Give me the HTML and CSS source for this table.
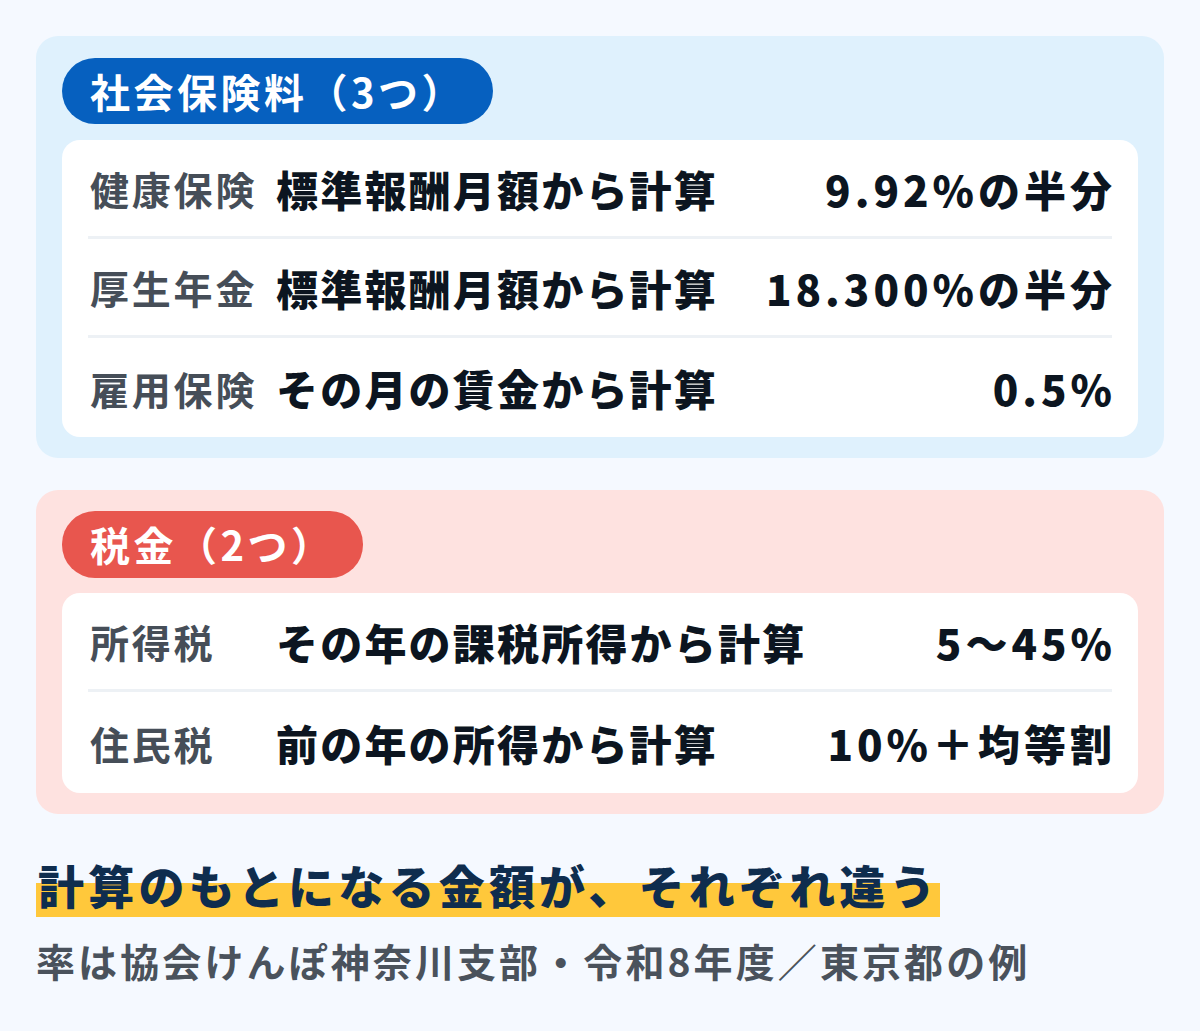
FILE: index.html
```html
<!DOCTYPE html>
<html lang="ja">
<head>
<meta charset="utf-8">
<link rel="stylesheet" href="styles.css">
</head>
<body>
<main class="page">
  <section class="panel panel-blue">
    <div class="badge badge-blue">社会保険料（3つ）</div>
    <div class="card">
      <div class="row">
        <span class="label">健康保険</span>
        <span class="desc">標準報酬月額から計算</span>
        <span class="value">9.92%の半分</span>
      </div>
      <div class="row">
        <span class="label">厚生年金</span>
        <span class="desc">標準報酬月額から計算</span>
        <span class="value">18.300%の半分</span>
      </div>
      <div class="row">
        <span class="label">雇用保険</span>
        <span class="desc">その月の賃金から計算</span>
        <span class="value">0.5%</span>
      </div>
    </div>
  </section>
  <section class="panel panel-red">
    <div class="badge badge-red">税金（2つ）</div>
    <div class="card">
      <div class="row">
        <span class="label">所得税</span>
        <span class="desc">その年の課税所得から計算</span>
        <span class="value">5〜45%</span>
      </div>
      <div class="row">
        <span class="label">住民税</span>
        <span class="desc">前の年の所得から計算</span>
        <span class="value">10%＋均等割</span>
      </div>
    </div>
  </section>
  <h2 class="headline"><span class="mark">計算のもとになる金額が、それぞれ違う</span></h2>
  <p class="note">率は協会けんぽ神奈川支部・令和8年度／東京都の例</p>
</main>
</body>
</html>
```

FILE: styles.css
```css
* { box-sizing: border-box; }
html, body { margin: 0; padding: 0; }
body {
  background: #f5f9ff;
  font-family: "Noto Sans CJK JP", "Noto Sans", sans-serif;
  width: 1200px;
  height: 1031px;
  overflow: hidden;
}
.page {
  padding: 36px 36px 0 36px;
  display: flex;
  flex-direction: column;
}
.panel {
  border-radius: 22px;
  padding: 22px 26px 21px 26px;
  display: flex;
  flex-direction: column;
  align-items: flex-start;
}
.panel-blue { background: #dff1fd; }
.panel-red { background: #fee2e0; margin-top: 32px; padding-top: 21px; }
.badge {
  height: 66px;
  border-radius: 33px;
  color: #ffffff;
  font-weight: 700;
  font-size: 40px;
  letter-spacing: 3.5px;
  line-height: 66px;
  padding: 0 28px 0 28px;
}
.badge-blue { background: #0660bf; }
.badge-red { background: #e8564e; height: 67px; line-height: 67px; }
.card {
  align-self: stretch;
  background: #ffffff;
  border-radius: 18px;
  padding: 0 26px;
  margin-top: 16px;
}
.panel-red .card { margin-top: 15px; }
.row {
  height: 99px;
  display: flex;
  align-items: center;
  border-bottom: 3px solid #edf1f5;
}
.row:last-child { border-bottom: none; height: 99px; }
.panel-red .row:last-child { height: 101px; }
.label {
  width: 188px;
  flex: none;
  color: #464e58;
  font-size: 39px;
  font-weight: 700;
  letter-spacing: 2.8px;
  padding-left: 2px;
}
.desc {
  flex: 1;
  color: #0c1520;
  font-size: 42px;
  font-weight: 900;
  letter-spacing: 2.2px;
}
.value {
  flex: none;
  color: #0c1520;
  font-size: 42px;
  font-weight: 900;
  letter-spacing: 4px;
  text-align: right;
  margin-right: -4px;
}
.headline {
  margin: 40px 0 0 0;
  font-size: 46px;
  font-weight: 900;
  color: #0f2d4e;
  letter-spacing: 4.2px;
  line-height: 60px;
}
.mark {
  background: linear-gradient(to bottom, transparent 0, transparent 32px, #ffc83b 32px, #ffc83b 60px);
  padding: 0 0 0 2px;
}
.note {
  margin: 18px 0 0 0;
  font-size: 39px;
  font-weight: 700;
  color: #4a525c;
  letter-spacing: 3.1px;
  line-height: 56px;
}
```
